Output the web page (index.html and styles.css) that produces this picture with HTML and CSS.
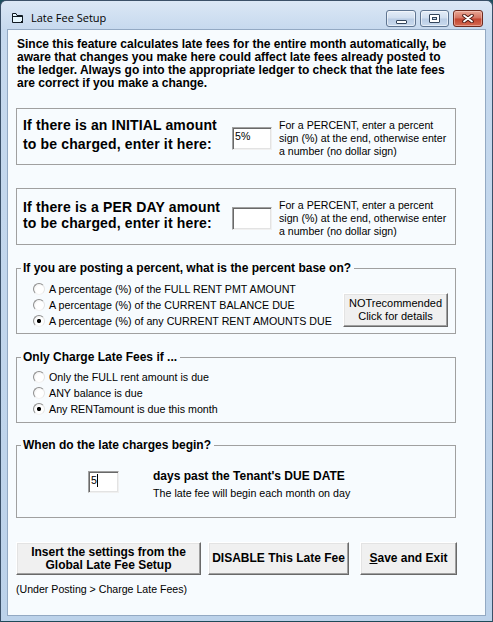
FILE: index.html
```
<!DOCTYPE html>
<html lang="en">
<head>
<meta charset="utf-8">
<title>Late Fee Setup</title>
<link rel="stylesheet" href="styles.css">
</head>
<body>
<div class="window">
  <div class="titlebar">
    <svg class="app-icon" width="11" height="10" viewBox="0 0 11 10">
      <path d="M0.5 0.5 H4 L5 2.5 H10.5 V9.5 H0.5 Z" fill="#e6f6fd" stroke="#111a22"/>
      <path d="M1 3.5 H10" stroke="#111a22"/>
      <rect x="9" y="8" width="2" height="2" fill="#111a22"/>
    </svg>
    <span class="title">Late Fee Setup</span>
    <div class="caption-buttons">
      <span class="cbtn cbtn-min"><span class="min-glyph"></span></span>
      <span class="cbtn cbtn-max"><span class="max-glyph"></span></span>
      <span class="cbtn cbtn-close">
        <svg width="14" height="9" viewBox="0 0 14 9">
          <path d="M3 1.5 L11 7.5 M11 1.5 L3 7.5" stroke="#4a1710" stroke-width="3.6" stroke-linecap="round"/>
          <path d="M3 1.5 L11 7.5 M11 1.5 L3 7.5" stroke="#ffffff" stroke-width="1.8" stroke-linecap="round"/>
        </svg>
      </span>
    </div>
  </div>
  <div class="client">
    <p class="warning">Since this feature calculates late fees for the entire month automatically, be<br>aware that changes you make here could affect late fees already posted to<br>the ledger. Always go into the appropriate ledger to check that the late fees<br>are correct if you make a change.</p>

    <div class="amount-box box-initial">
      <div class="amount-label">If there is an INITIAL amount<br>to be charged, enter it here:</div>
      <div class="field field-amount">5%</div>
      <div class="hint">For a PERCENT, enter a percent<br>sign (%) at the end, otherwise enter<br>a number (no dollar sign)</div>
    </div>

    <div class="amount-box box-per-day">
      <div class="amount-label">If there is a PER DAY amount<br>to be charged, enter it here:</div>
      <div class="field field-amount"></div>
      <div class="hint">For a PERCENT, enter a percent<br>sign (%) at the end, otherwise enter<br>a number (no dollar sign)</div>
    </div>

    <div class="group group-base">
      <div class="legend">If you are posting a percent, what is the percent base on?</div>
      <div class="group-body base-body">
        <div class="radio-list">
          <div class="radio-row"><span class="radio"></span>A percentage (%) of the FULL RENT PMT AMOUNT</div>
          <div class="radio-row"><span class="radio"></span>A percentage (%) of the CURRENT BALANCE DUE</div>
          <div class="radio-row"><span class="radio checked"></span>A percentage (%) of any CURRENT RENT AMOUNTS DUE</div>
        </div>
        <div class="btn btn-details">NOTrecommended<br>Click for details</div>
      </div>
    </div>

    <div class="group group-only">
      <div class="legend">Only Charge Late Fees if ...</div>
      <div class="group-body only-body">
        <div class="radio-list">
          <div class="radio-row"><span class="radio"></span>Only the FULL rent amount is due</div>
          <div class="radio-row"><span class="radio"></span>ANY balance is due</div>
          <div class="radio-row"><span class="radio checked"></span>Any RENTamount is due this month</div>
        </div>
      </div>
    </div>

    <div class="group group-begin">
      <div class="legend">When do the late charges begin?</div>
      <div class="begin-body">
        <div class="field field-days">5<span class="caret"></span></div>
        <div class="begin-text">
          <div class="begin-strong">days past the Tenant's DUE DATE</div>
          <div class="begin-note">The late fee will begin each month on day</div>
        </div>
      </div>
    </div>

    <div class="actions">
      <div class="btn btn-action btn-insert">Insert the settings from the<br>Global Late Fee Setup</div>
      <div class="btn btn-action btn-disable">DISABLE This Late Fee</div>
      <div class="btn btn-action btn-save"><span class="accel">S</span>ave and Exit</div>
    </div>

    <p class="footnote">(Under Posting &gt; Charge Late Fees)</p>
  </div>
</div>
</body>
</html>
```

FILE: styles.css
```
* { box-sizing: border-box; }

html, body {
  margin: 0;
  padding: 0;
}

body {
  width: 493px;
  height: 622px;
  overflow: hidden;
  background: #1d4f5e;
  font-family: "Liberation Sans", Arial, sans-serif;
  color: #000;
}

.window {
  width: 493px;
  height: 622px;
  border: 1px solid #3b5068;
  border-bottom-color: #1f4a58;
  border-radius: 6px 6px 0 0;
  background: linear-gradient(to bottom, #dbe7f5 0, #c6d9ee 29px, #bcd2ea 100%);
  display: flex;
  flex-direction: column;
}

/* ---------- title bar ---------- */
.titlebar {
  flex: none;
  height: 29px;
  display: flex;
  align-items: flex-start;
  padding: 0 9px 0 11px;
}

.app-icon {
  flex: none;
  margin-top: 12px;
}

.title {
  margin: 9px 0 0 8px;
  font-family: "Open Sans", "Noto Sans", sans-serif;
  font-size: 11px;
  line-height: 16px;
  color: #000;
}

.caption-buttons {
  margin-left: auto;
  margin-top: 9px;
  display: flex;
  gap: 4px;
}

.cbtn {
  height: 17px;
  border-radius: 3px;
  display: flex;
  align-items: center;
  justify-content: center;
  border: 1px solid #5f7591;
  box-shadow: inset 0 0 0 1px rgba(255, 255, 255, 0.55);
  background: linear-gradient(to bottom, #e4edf8 0%, #d0deef 48%, #b9cce4 52%, #c9daee 100%);
}

.cbtn-min { width: 30px; }
.cbtn-max { width: 29px; }

.cbtn-close {
  width: 30px;
  border-color: #6e2a1f;
  background: linear-gradient(to bottom, #e9a896 0%, #d47260 48%, #c2442f 52%, #d46a52 100%);
  box-shadow: inset 0 0 0 1px rgba(255, 220, 210, 0.45);
}

.min-glyph {
  width: 11px;
  height: 4px;
  margin-top: 6px;
  background: #fff;
  border: 1px solid #33455b;
  border-radius: 1px;
}

.max-glyph {
  width: 11px;
  height: 9px;
  background: #c9d9ec;
  border: 1px solid #33455b;
  border-radius: 1px;
  box-shadow: inset 0 0 0 2px #fff, inset 0 0 0 3px #33455b;
}

/* ---------- client area ---------- */
.client {
  flex: none;
  height: 585px;
  margin: 0 7px;
  background: #f7fbfe;
  box-shadow: 0 0 0 1px #93a9c3;
}

.warning {
  margin: 0;
  padding: 8px 0 0 9px;
  font-weight: bold;
  font-size: 12px;
  line-height: 13px;
  white-space: nowrap;
}

.amount-box {
  margin: 18px 0 0 8px;
  width: 440px;
  height: 57px;
  border: 1px solid #a0a0a0;
  padding-left: 6px;
  display: grid;
  grid-template-columns: 202px 40px auto;
  column-gap: 7px;
  align-items: start;
}

.box-per-day { margin-top: 23px; }

.amount-label {
  font-weight: bold;
  font-size: 14px;
  letter-spacing: 0.15px;
  white-space: nowrap;
}

.box-initial .amount-label {
  padding-top: 7px;
  line-height: 19px;
}

.box-per-day .amount-label {
  padding-top: 10px;
  line-height: 16px;
}

.field {
  background: #fff;
  border: 1px solid;
  border-color: #a0a0a0 #f0f0f0 #f0f0f0 #a0a0a0;
  box-shadow: inset 1px 1px 0 #696969, inset -1px -1px 0 #e3e3e3;
  padding: 2px 0 0 2px;
  font-size: 10.6px;
  line-height: 13px;
  white-space: nowrap;
}

.field-amount {
  margin-top: 18px;
  width: 40px;
  height: 23px;
}

.hint {
  padding-top: 10px;
  font-size: 10.6px;
  line-height: 13px;
  white-space: nowrap;
}

/* ---------- group boxes ---------- */
.group {
  margin: 23px 0 0 8px;
  width: 440px;
  border: 1px solid #a0a0a0;
}

.group-base { height: 66px; }
.group-only { height: 66px; }
.group-begin { height: 73px; margin-top: 22px; }

.legend {
  width: fit-content;
  margin: -8px 0 0 4px;
  padding: 0 3px 0 2px;
  background: #f7fbfe;
  font-weight: bold;
  font-size: 12px;
  line-height: 14px;
  white-space: nowrap;
}

.group-body {
  display: flex;
  justify-content: space-between;
  align-items: flex-start;
  padding: 0 7px 0 16px;
}

.base-body { margin-top: 6px; }
.only-body { margin-top: 5px; }

.radio-list {
  display: flex;
  flex-direction: column;
}

.radio-row {
  height: 16px;
  display: flex;
  align-items: center;
  font-size: 10.7px;
  white-space: nowrap;
}

.radio {
  flex: none;
  width: 12px;
  height: 12px;
  margin-right: 4px;
  border-radius: 50%;
  border: 1px solid;
  border-color: #8e8e8e #e4e4e4 #f2f2f2 #8e8e8e;
  background: radial-gradient(circle at 60% 60%, #ffffff 0, #ffffff 45%, #e4e4e4 100%);
}

.radio.checked {
  background:
    radial-gradient(circle at 50% 50%, #000 0, #000 1.8px, transparent 2.4px),
    radial-gradient(circle at 60% 60%, #ffffff 0, #ffffff 45%, #e4e4e4 100%);
}

/* ---------- buttons ---------- */
.btn {
  background: #f0f0f0;
  border: 1px solid;
  border-color: #ffffff #696969 #696969 #ffffff;
  box-shadow: inset -1px -1px 0 #a0a0a0, inset 1px 1px 0 #e3e3e3;
  display: flex;
  align-items: center;
  justify-content: center;
  text-align: center;
  white-space: nowrap;
}

.btn-details {
  width: 105px;
  height: 34px;
  margin-top: 12px;
  font-size: 11px;
  line-height: 13px;
}

.begin-body {
  display: flex;
  align-items: flex-start;
  margin-top: 19px;
  padding-left: 71px;
}

.field-days {
  flex: none;
  width: 31px;
  height: 22px;
}

.caret {
  display: inline-block;
  width: 1px;
  height: 13px;
  vertical-align: top;
  background: #000;
}

.begin-text {
  margin: -3px 0 0 34px;
  white-space: nowrap;
}

.begin-strong {
  font-weight: bold;
  font-size: 12px;
  line-height: 16px;
}

.begin-note {
  font-size: 10.7px;
  line-height: 18px;
}

.actions {
  display: flex;
  margin: 24px 0 0 8px;
}

.btn-action {
  height: 33px;
  font-weight: bold;
  font-size: 12px;
  line-height: 13px;
}

.btn-insert { width: 185px; }
.btn-disable { width: 141px; margin-left: 7px; }
.btn-save { width: 97px; margin-left: 11px; }

.accel { text-decoration: underline; }

.footnote {
  margin: 8px 0 0 8px;
  font-size: 10.6px;
  line-height: 13px;
  white-space: nowrap;
}
```
